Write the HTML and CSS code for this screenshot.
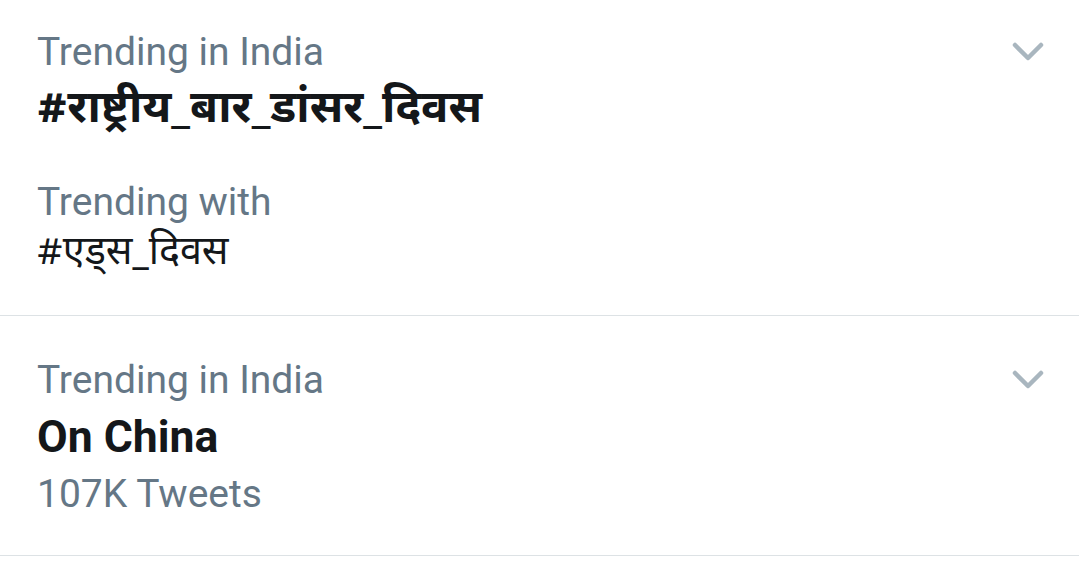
FILE: index.html
```html
<!DOCTYPE html>
<html>
<head>
<meta charset="utf-8">
<link rel="stylesheet" href="styles.css">
</head>
<body>
<div class="list">
  <div class="item first">
    <div class="content">
      <div class="meta">Trending in India</div>
      <div class="title deva">#राष्ट्रीय_बार_डांसर_दिवस</div>
      <div class="meta with">Trending with</div>
      <div class="related deva">#एड्स_दिवस</div>
    </div>
    <svg class="chev" width="32" height="20" viewBox="0 0 32 20"><path d="M3 3 L16 16 L29 3" fill="none" stroke="#a9b6bf" stroke-width="4.5" stroke-linecap="round" stroke-linejoin="round"/></svg>
  </div>
  <div class="item second">
    <div class="content">
      <div class="meta">Trending in India</div>
      <div class="title china">On China</div>
      <div class="meta">107K Tweets</div>
    </div>
    <svg class="chev" width="32" height="20" viewBox="0 0 32 20"><path d="M3 3 L16 16 L29 3" fill="none" stroke="#a9b6bf" stroke-width="4.5" stroke-linecap="round" stroke-linejoin="round"/></svg>
  </div>
</div>
</body>
</html>
```
FILE: styles.css
```css
html, body {
  margin: 0;
  padding: 0;
  background: #ffffff;
}
body {
  font-family: Roboto, "Noto Sans", "Noto Sans Devanagari", "Lohit Devanagari", sans-serif;
  width: 1079px;
  height: 564px;
  overflow: hidden;
}
.item {
  display: flex;
  justify-content: space-between;
  align-items: flex-start;
  padding: 0 35px 0 37px;
  border-bottom: 1.5px solid #dde2e5;
  box-sizing: border-box;
}
.first {
  height: 316px;
  padding-top: 27px;
}
.second {
  height: 240px;
  padding-top: 39px;
}
.meta {
  color: #657786;
  font-size: 39px;
  line-height: 50px;
}
.with {
  margin-top: 35px;
}
.title {
  color: #14171a;
  font-size: 45.5px;
  font-weight: 700;
  line-height: 62px;
}
.title.deva {
  margin-top: 3px;
}
.china {
  font-size: 44.5px;
  line-height: 64px;
}
.related {
  color: #14171a;
  font-size: 39.5px;
  line-height: 52px;
  margin-top: 2px;
}
.deva {
  font-family: "Noto Sans Devanagari", "Lohit Devanagari", "Noto Sans", Roboto, sans-serif;
}
.chev {
  margin-top: 15px;
}
```
